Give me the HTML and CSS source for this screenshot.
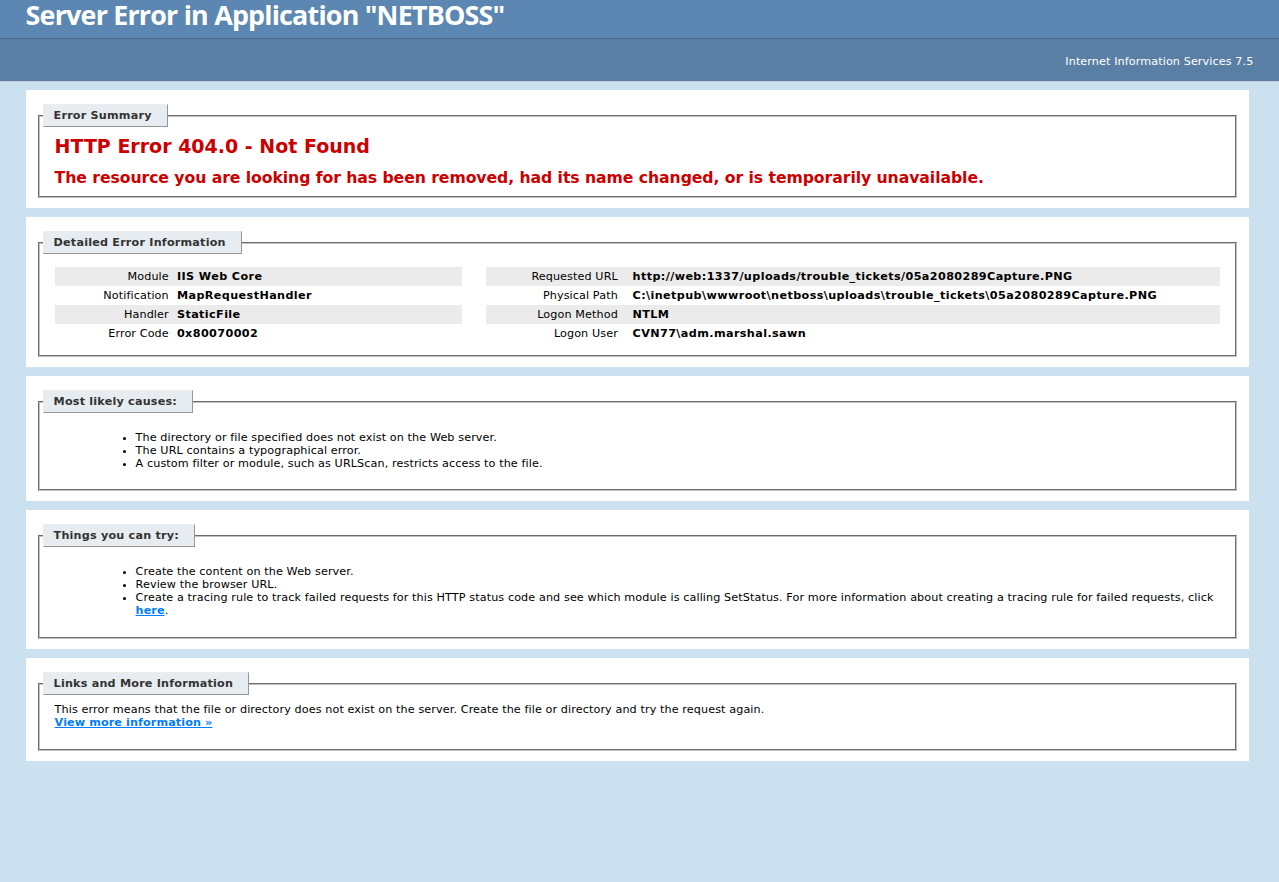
FILE: index.html
```html
<!DOCTYPE html>
<html>
<head>
<meta charset="utf-8">
<title>IIS 7.5 Detailed Error - 404.0 - Not Found</title>
<link rel="stylesheet" href="styles.css">
</head>
<body>
<div class="header"><h1>Server Error in Application "NETBOSS"</h1></div>
<div class="server-version"><p>Internet Information Services 7.5</p></div>
<div class="content">
  <div class="content-container">
    <fieldset class="tight"><legend>Error Summary</legend>
      <h2>HTTP Error 404.0 - Not Found</h2>
      <h3>The resource you are looking for has been removed, had its name changed, or is temporarily unavailable.</h3>
    </fieldset>
  </div>
  <div class="content-container">
    <fieldset class="tight"><legend>Detailed Error Information</legend>
      <div class="details">
        <div class="details-left">
          <table>
            <tr class="alt"><th>Module</th><td>IIS Web Core</td></tr>
            <tr><th>Notification</th><td>MapRequestHandler</td></tr>
            <tr class="alt"><th>Handler</th><td>StaticFile</td></tr>
            <tr><th>Error Code</th><td>0x80070002</td></tr>
          </table>
        </div>
        <div class="details-right">
          <table>
            <tr class="alt"><th>Requested URL</th><td>http://web:1337/uploads/trouble_tickets/05a2080289Capture.PNG</td></tr>
            <tr><th>Physical Path</th><td>C:\inetpub\wwwroot\netboss\uploads\trouble_tickets\05a2080289Capture.PNG</td></tr>
            <tr class="alt"><th>Logon Method</th><td>NTLM</td></tr>
            <tr><th>Logon User</th><td>CVN77\adm.marshal.sawn</td></tr>
          </table>
        </div>
      </div>
    </fieldset>
  </div>
  <div class="content-container">
    <fieldset class="tight"><legend>Most likely causes:</legend>
      <ul>
        <li>The directory or file specified does not exist on the Web server.</li>
        <li>The URL contains a typographical error.</li>
        <li>A custom filter or module, such as URLScan, restricts access to the file.</li>
      </ul>
    </fieldset>
  </div>
  <div class="content-container">
    <fieldset><legend>Things you can try:</legend>
      <ul>
        <li>Create the content on the Web server.</li>
        <li>Review the browser URL.</li>
        <li>Create a tracing rule to track failed requests for this HTTP status code and see which module is calling SetStatus. For more information about creating a tracing rule for failed requests, click <a href="#">here</a>.</li>
      </ul>
    </fieldset>
  </div>
  <div class="content-container">
    <fieldset><legend>Links and More Information</legend>
      This error means that the file or directory does not exist on the server. Create the file or directory and try the request again.
      <p><a href="#">View more information &raquo;</a></p>
    </fieldset>
  </div>
</div>
</body>
</html>
```
FILE: styles.css
```css
body {
  margin: 0;
  font-size: 11.2px;
  line-height: 13px;
  letter-spacing: 0.1px;
  font-family: "DejaVu Sans", Verdana, sans-serif;
  background: #CBE1EF;
  color: #000;
}
ul { margin: 10px 0 10px 40px; padding-left: 41px; }
fieldset {
  margin: 0 2px;
  padding: 0 15px 10px 15px;
  border: 2px groove #c0c0c0;
}
fieldset.tight { padding-bottom: 9px; }
legend {
  color: #333333;
  padding: 4px 15px 4px 10px;
  margin: 0 0 8px -12px;
  border-top: 1px solid #EDEDED;
  border-left: 1px solid #EDEDED;
  border-right: 1px solid #969696;
  border-bottom: 1px solid #969696;
  background: #E7ECF0;
  font-weight: bold;
  font-size: 11.2px;
  letter-spacing: 0.2px;
}
a:link, a:visited { color: #007EFF; font-weight: bold; }
h1 {
  font-size: 26.88px;
  line-height: 26px;
  letter-spacing: -0.8px;
  margin: 0;
  color: #FFF;
  font-family: "Open Sans", "DejaVu Sans", sans-serif;
  font-weight: 700;
}
h2 { font-size: 19px; line-height: 23px; margin: 0; color: #CC0000; letter-spacing: 0; }
h3 { font-size: 15.68px; line-height: 19px; margin: 10px 0 0 0; color: #CC0000; letter-spacing: -0.07px; }
.header {
  padding: 2px 2% 10px 2%;
  height: 26px;
  background-color: #5C87B2;
  color: #FFF;
}
.server-version {
  padding: 11px 2% 8px 2%;
  margin: 0 0 8px 0;
  background-color: #5A7FA5;
  border-bottom: 1px solid #C1CFDD;
  border-top: 1px solid #4A6C8E;
  color: #FFF;
  text-align: right;
}
.server-version p { margin: 5px 0; }
.content { margin: 0 0 0 2%; }
.content-container {
  background: #FFF;
  width: 96%;
  margin-bottom: 9px;
  padding: 14px 10px 10px 10px;
}
.content-container p { margin: 0 0 10px 0; }
.details { display: flex; }
.details-left { width: 35%; margin-right: 2%; }
.details-right { width: 63%; overflow: hidden; }
table {
  margin: 5px 0 3px 0;
  width: 100%;
  border: none;
  border-collapse: collapse;
  table-layout: fixed;
}
td, th {
  vertical-align: top;
  padding: 3px 0;
  text-align: left;
  font-weight: bold;
  border: none;
  white-space: nowrap;
}
td { letter-spacing: 0.4px; }
th {
  box-sizing: border-box;
  width: 30%;
  text-align: right;
  padding-right: 2%;
  font-weight: normal;
}
.details-right th { width: 20%; }
tr.alt td, tr.alt th { background-color: #ebebeb; }
```
